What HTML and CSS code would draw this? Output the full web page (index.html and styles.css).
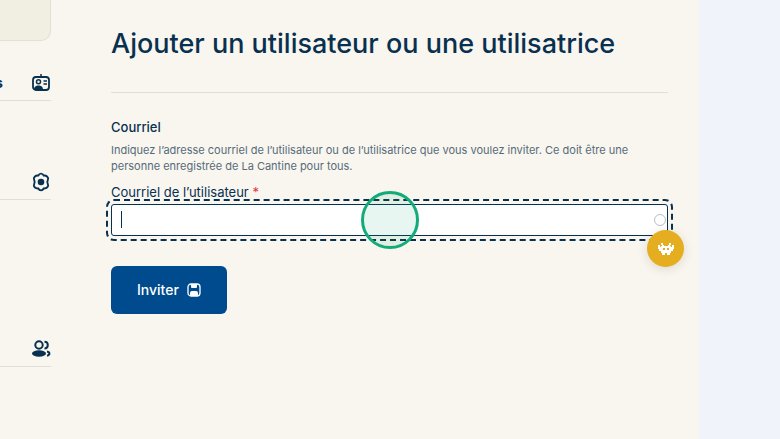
FILE: index.html
```
<!DOCTYPE html>
<html lang="fr">
<head>
    <meta charset="UTF-8">
    <meta name="viewport" content="width=device-width, initial-scale=1.0">
    <title>Ajouter un utilisateur ou une utilisatrice</title>
    <link rel="stylesheet" href="styles.css">
</head>
<body>
<div class="page">
    <nav class="sidebar" aria-label="Menu">
        <div class="side-card"></div>
        <a class="side-item item-contacts" href="#">
            <span>s</span>
            <svg width="20" height="18" viewBox="0 0 20 18" aria-hidden="true">
                <rect x="2" y="3" width="16" height="13" rx="3" fill="none" stroke="#08304f" stroke-width="1.800"/>
                <path d="M10 0v3.500M12.500 7h3.500M12.500 10h3.500" stroke="#08304f" stroke-width="1.500"/>
                <circle cx="7.500" cy="7.800" r="2" fill="none" stroke="#08304f" stroke-width="1.500"/>
                <path d="M3 16c0-3.500 2-4.500 4.500-4.500S12 12.500 12 16z" fill="#08304f"/>
            </svg>
        </a>
        <a class="side-item item-settings" href="#" aria-label="Paramètres">
            <svg width="20" height="20" viewBox="0 0 20 20" aria-hidden="true">
                <path d="M7.300 3.600C8.500 1 11.500 1 12.700 3.600C15.600 3.300 18 5.500 16.900 7.600C16.200 9 16.200 11 16.900 12.400C18 14.500 15.600 16.700 12.700 16.400C11.500 19 8.500 19 7.300 16.400C4.400 16.700 2 14.500 3.100 12.400C3.800 11 3.800 9 3.100 7.600C2 5.500 4.400 3.300 7.300 3.600z" fill="none" stroke="#08304f" stroke-width="1.900"/>
                <circle cx="10" cy="10" r="3.300" fill="#08304f"/>
            </svg>
        </a>
        <a class="side-item item-users" href="#" aria-label="Utilisateurs">
            <svg width="20" height="18" viewBox="0 0 20 18" aria-hidden="true">
                <circle cx="8" cy="5" r="3.700" fill="none" stroke="#08304f" stroke-width="2"/>
                <ellipse cx="8" cy="13.500" rx="7" ry="3.300" fill="#08304f"/>
                <path d="M13.500 1.700c2.200 0 3.300 1.500 3.300 3.400S15.700 8.500 13.500 8.500M16 11.500c3.200 .5 3.200 3.700 0 4.200" fill="none" stroke="#08304f" stroke-width="2"/>
            </svg>
        </a>
    </nav>

    <main class="content">
        <h1>Ajouter un utilisateur ou une utilisatrice</h1>
        <form class="invite-form">
            <h2>Courriel</h2>
            <p class="hint" id="hint">Indiquez l’adresse courriel de l’utilisateur ou de l’utilisatrice que vous voulez inviter. Ce doit être une personne enregistrée de La Cantine pour tous.</p>
            <label for="email">Courriel de l’utilisateur <span class="required">*</span></label>
            <div class="field">
                <input type="email" id="email" aria-describedby="hint">
                <span class="caret"></span>
                <span class="field-ring"></span>
                <span class="click-mark"></span>
                <button type="button" class="help" aria-label="Aide">
                    <svg width="16" height="12" viewBox="0 0 16 12" aria-hidden="true">
                        <path fill="#fff" fill-rule="evenodd" d="M3 0h2v2h1v1h4V2h1V0h2v2h-1v1h1v1h1V2h2v4h-1v2h-2v2h-1v2h-3v-2H7v2H4v-2H3V8H1V6H0V2h2v2h1V3h1V2H3zM5 5v2h2V5zM9 5v2h2V5z"/>
                    </svg>
                </button>
            </div>
            <button type="submit" class="submit">
                Inviter
                <svg width="14" height="14" viewBox="0 0 14 14" aria-hidden="true">
                    <rect x="1" y="1" width="12" height="12" rx="3" fill="none" stroke="#fff" stroke-width="1.300"/>
                    <path d="M4 1h6v3q0 1-1 1H5Q4 5 4 4zM3 13v-3q0-2 2-2h4q2 0 2 2v3z" fill="#fff"/>
                </svg>
            </button>
        </form>
    </main>
</div>
</body>
</html>
```
FILE: styles.css
```
* {
    box-sizing: border-box;
}

body {
    margin: 0;
    background-color: #f0f3f9;
    color: #08304f;
    font-family: "Inter", sans-serif;
}

.page {
    display: flex;
    min-height: 100vh;
    margin-right: 81px;
    background-color: #f9f6ef;
}

/* Side menu */
.sidebar {
    flex: 0 0 51px;
}

.side-card {
    height: 41px;
    border: 1px solid #e4e1d4;
    border-width: 0 1px 1px 0;
    border-radius: 0 0 10px 0;
    background-color: #f1eee2;
}

.side-item {
    display: flex;
    align-items: center;
    justify-content: flex-end;
    border-bottom: 1px solid #e2dfd9;
    color: #08304f;
    font-size: 14px;
    font-weight: 700;
    text-decoration: none;
}

.item-contacts {
    justify-content: space-between;
    margin-top: 24px;
    height: 36px;
    margin-left: -5px;
}

.item-settings {
    margin-top: 63px;
    height: 36px;
}

.item-users {
    margin-top: 131px;
    height: 36px;
}

/* Form */
.content {
    flex: 1;
    padding: 24px 31px 40px 60px;
}

h1 {
    margin: 0;
    padding-bottom: 28px;
    border-bottom: 1px solid #e2dfd9;
    font-size: 27px;
    font-weight: 500;
    line-height: 40px;
}

h2 {
    margin: 25px 0 6px;
    font-size: 13px;
    font-weight: 500;
    line-height: 18px;
}

.hint {
    margin: 0 0 8px;
    color: #566b7a;
    font-size: 11px;
    line-height: 16px;
}

label {
    display: block;
    font-size: 13px;
    line-height: 20px;
    margin-bottom: 2px;
}

.required {
    color: #e1374a;
}

.field {
    position: relative;
}

input {
    display: block;
    width: 100%;
    height: 32px;
    padding: 0 10px;
    border: 1px solid #08304f;
    border-radius: 3px;
    outline: 2px dashed #08304f;
    outline-offset: 3px;
    background-color: #fff;
    color: #08304f;
    font: inherit;
    font-size: 13px;
}

.caret {
    position: absolute;
    top: 7px;
    left: 10px;
    width: 1px;
    height: 17px;
    background-color: #08304f;
}

.field-ring {
    position: absolute;
    top: 10px;
    right: 2px;
    width: 12px;
    height: 12px;
    border: 1px solid #b5c1c7;
    border-radius: 50%;
}

.click-mark {
    position: absolute;
    top: 50%;
    left: 50%;
    width: 58px;
    height: 58px;
    border: 3px solid #14ab7a;
    border-radius: 50%;
    background-color: rgba(20, 171, 122, 0.1);
    transform: translate(-50%, -50%);
}

.help {
    position: absolute;
    top: 26px;
    right: -16px;
    display: flex;
    align-items: center;
    justify-content: center;
    width: 37px;
    height: 37px;
    padding: 0;
    border: none;
    border-radius: 50%;
    background-color: #e5ae20;
    box-shadow: 0 2px 12px rgba(0, 0, 0, 0.12);
    cursor: pointer;
}

.submit {
    display: flex;
    align-items: center;
    gap: 8px;
    margin-top: 30px;
    padding: 14px 26px;
    border: none;
    border-radius: 6px;
    background-color: #004b8d;
    color: #fff;
    font-family: inherit;
    font-size: 14px;
    font-weight: 500;
    line-height: 20px;
    cursor: pointer;
}
```
